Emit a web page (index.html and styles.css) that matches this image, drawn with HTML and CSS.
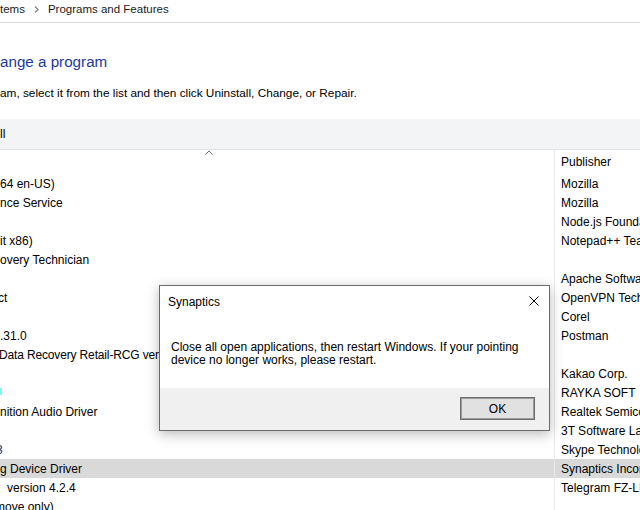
FILE: index.html
```html
<!DOCTYPE html>
<html>
<head>
<meta charset="utf-8">
<title>Programs and Features</title>
<link rel="stylesheet" href="styles.css">
</head>
<body>
<div class="crumbs">
  <span class="crumb">tems</span>
  <svg class="crumb-sep" width="5" height="7" viewBox="0 0 5 7"><polyline points="1,0.5 4,3.5 1,6.5" fill="none" stroke="#7f7f7f" stroke-width="1.2"/></svg>
  <span class="crumb">Programs and Features</span>
</div>

<div class="intro">
  <h1 class="heading">ange a program</h1>
  <p class="instr">am, select it from the list and then click Uninstall, Change, or Repair.</p>
</div>

<div class="toolbar"><span class="tool">ll</span></div>

<div class="list">
  <div class="row header">
    <div class="name"><svg class="sort-caret" width="8" height="5" viewBox="0 0 8 5"><polyline points="0.5,4.5 4,1 7.5,4.5" fill="none" stroke="#707070" stroke-width="1"/></svg></div>
    <div class="pub">Publisher</div>
  </div>
  <div class="row"><div class="name">64 en-US)</div><div class="pub">Mozilla</div></div>
  <div class="row"><div class="name">nce Service</div><div class="pub">Mozilla</div></div>
  <div class="row"><div class="name"></div><div class="pub">Node.js Foundation</div></div>
  <div class="row"><div class="name">it x86)</div><div class="pub">Notepad++ Team</div></div>
  <div class="row"><div class="name">overy Technician</div><div class="pub"></div></div>
  <div class="row"><div class="name"></div><div class="pub">Apache Software Foundation</div></div>
  <div class="row"><div class="name"><span class="cut1">ct</span></div><div class="pub">OpenVPN Technologies</div></div>
  <div class="row"><div class="name"></div><div class="pub">Corel</div></div>
  <div class="row"><div class="name">.31.0</div><div class="pub">Postman</div></div>
  <div class="row"><div class="name"><span class="cut2">Data Recovery Retail-RCG version</span></div><div class="pub"></div></div>
  <div class="row"><div class="name"></div><div class="pub">Kakao Corp.</div></div>
  <div class="row"><div class="name"><span class="icon-bit"></span></div><div class="pub">RAYKA SOFT</div></div>
  <div class="row"><div class="name">nition Audio Driver</div><div class="pub">Realtek Semiconductor</div></div>
  <div class="row"><div class="name"></div><div class="pub">3T Software Labs</div></div>
  <div class="row"><div class="name"><span class="cut3">3</span></div><div class="pub">Skype Technologies</div></div>
  <div class="row selected"><div class="name">g Device Driver</div><div class="pub">Synaptics Incorporated</div></div>
  <div class="row"><div class="name"><span class="indent">version 4.2.4</span></div><div class="pub">Telegram FZ-LLC</div></div>
  <div class="row"><div class="name"><span class="cut5">move only)</span></div><div class="pub"></div></div>
</div>

<div class="dialog">
  <div class="dlg-title">
    <span>Synaptics</span>
    <svg class="dlg-close" width="10" height="10" viewBox="0 0 10 10"><path d="M0.5 0.5 L9.5 9.5 M9.5 0.5 L0.5 9.5" stroke="#000" stroke-width="1"/></svg>
  </div>
  <div class="dlg-body">
    <p class="dlg-msg">Close all open applications, then restart Windows. If your pointing<br>device no longer works, please restart.</p>
  </div>
  <div class="dlg-foot">
    <button class="btn">OK</button>
  </div>
</div>
</body>
</html>
```

FILE: styles.css
```css
html, body {
  margin: 0;
  padding: 0;
}
body {
  width: 640px;
  height: 510px;
  overflow: hidden;
  background: #fff;
  color: #000;
  font-family: "Liberation Sans", Arial, sans-serif;
  font-size: 12px;
  position: relative;
}

/* breadcrumb */
.crumbs {
  height: 23px;
  box-sizing: border-box;
  border-bottom: 1px solid #d9d9d9;
  display: flex;
  align-items: flex-start;
  font-size: 11.5px;
  line-height: 18px;
  color: #1a1a1a;
}
.crumb-sep {
  margin: 6px 9px 0 9px;
}

/* intro */
.heading {
  margin: 0;
  padding-top: 27px;
  font-size: 15.2px;
  font-weight: normal;
  line-height: 24px;
  color: #1e3a9a;
}
.instr {
  margin: 0;
  padding-top: 11px;
  line-height: 16px;
  font-size: 11.8px;
}

/* toolbar */
.toolbar {
  margin-top: 18px;
  height: 30px;
  background: #f3f4f6;
  border-bottom: 1px solid #e3e3e3;
  line-height: 30px;
}

/* list */
.list {
  display: grid;
  grid-template-columns: 554px 1fr;
}
.row {
  display: contents;
}
.row > div {
  height: 19px;
  line-height: 21px;
  white-space: nowrap;
  overflow: hidden;
}
.row.header > div {
  height: 24px;
  line-height: 24px;
}
.name {
  display: flex;
  align-items: flex-start;
}
.pub {
  border-left: 1px solid #eaeaea;
  padding-left: 6px;
}
.row.selected > div {
  background: #d9d9d9;
}
.sort-caret {
  margin-left: 205px;
  margin-top: 0;
}
.cut1 { margin-left: -2px; }
.cut2 { margin-left: -1px; letter-spacing: -0.15px; }
.cut3 { margin-left: -4px; color: #1b2a5a; }
.cut5 { margin-left: -5px; }
.indent { padding-left: 7px; }
.icon-bit {
  display: block;
  width: 2px;
  height: 7px;
  margin-top: 5px;
  background: #7ff5f8;
}

/* dialog */
.dialog {
  position: absolute;
  left: 159px;
  top: 285px;
  width: 391px;
  height: 146px;
  box-sizing: border-box;
  border: 1px solid #6b6b6b;
  background: #fff;
  box-shadow: 0 3px 12px rgba(0, 0, 0, 0.28);
  display: flex;
  flex-direction: column;
}
.dlg-title {
  height: 30px;
  box-sizing: border-box;
  padding: 8px 0 0 8px;
  line-height: 16px;
  display: flex;
  align-items: flex-start;
  justify-content: space-between;
}
.dlg-close {
  margin-top: 2px;
  margin-right: 10px;
}
.dlg-body {
  height: 72px;
  box-sizing: border-box;
  padding: 25px 0 0 11px;
}
.dlg-msg {
  margin: 0;
  line-height: 13px;
}
.dlg-foot {
  flex: 1;
  background: #f0f0f0;
  display: flex;
  justify-content: flex-end;
  align-items: flex-start;
  padding: 9px 14px 0 0;
}
.btn {
  width: 75px;
  height: 23px;
  box-sizing: border-box;
  border: 1px solid #6e6e6e;
  box-shadow: inset 0 0 0 1px #9a9a9a;
  background: #e1e1e1;
  font-family: inherit;
  font-size: 12px;
  color: #000;
  padding: 0;
  margin: 0;
}
```
